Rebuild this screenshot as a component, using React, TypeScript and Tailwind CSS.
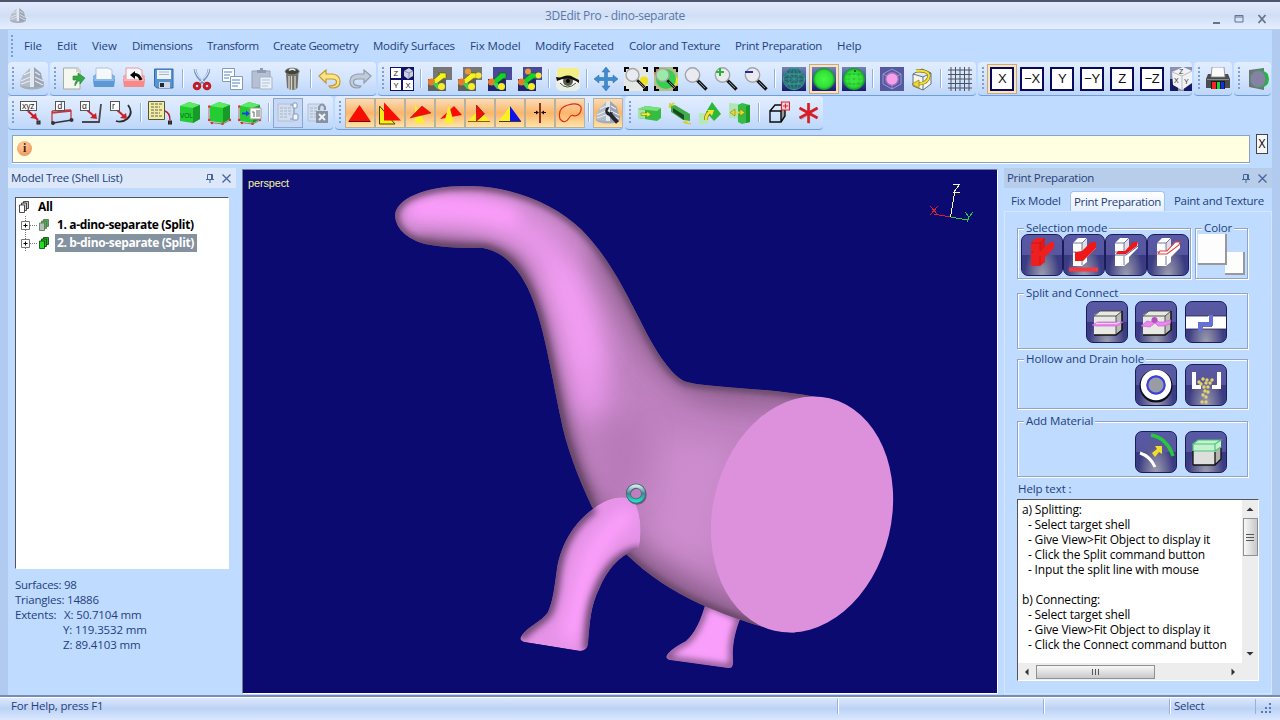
import React from 'react';

type Kids = { children?: React.ReactNode };

function Icon({ children, className = 'h-6 w-6' }: Kids & { className?: string }) {
  return (
    <svg viewBox="0 0 24 24" className={`${className} shrink-0`} fill="none">
      {children}
    </svg>
  );
}

function Cell({ children, state = 'none' }: Kids & { state?: 'none' | 'on' | 'hot' | 'pressed' }) {
  const look =
    state === 'on'
      ? 'border border-[#b9b1a0] bg-gradient-to-b from-[#f9dcb6] via-[#fbb568] to-[#fde3a8]'
      : state === 'hot'
        ? 'border border-[#c7ab7c] bg-[#fbe3c0]'
        : state === 'pressed'
          ? 'border border-[#8ba5d2] bg-[#c5d8f5]'
          : '';
  return <div className={`flex h-[30px] w-[30px] shrink-0 items-center justify-center ${look}`}>{children}</div>;
}

function Sep() {
  return (
    <div className="flex w-2 shrink-0 justify-center">
      <div className="h-[19px] w-[2px] border-l border-[#8db3e3] bg-white" />
    </div>
  );
}

function Grip({ className = 'w-[9px]' }: { className?: string }) {
  return (
    <div className={`flex shrink-0 justify-center ${className}`}>
      <div className="h-[23px] w-[2px] bg-[repeating-linear-gradient(to_bottom,#7ba0d6_0_2px,transparent_2px_4px)]" />
    </div>
  );
}

function Segment({ children, className }: Kids & { className: string }) {
  return (
    <div
      className={`flex shrink-0 items-center overflow-hidden rounded-sm border-b border-[#6f9dd8] bg-gradient-to-b from-[#e2edff] via-[#d3e4fd] to-[#bdd6f9] ${className}`}
    >
      {children}
    </div>
  );
}

const Logo = ({ wrench = false }: { wrench?: boolean }) => (
  <Icon>
    <ellipse cx="12" cy="18.500" rx="12" ry="4" fill="#a3adbc" />
    <path d="M0 15L3 8l7-7v19L1 19z" fill="#b3bcc9" />
    <path d="M10 1l4-1v20h-4z" fill="#e3e8ef" />
    <path d="M14 0l7 6 1 5 2 5-1 3-9 2z" fill="#9aa4b4" />
    <path d="M1 14l9-4M1 17l9-3M4 8l6-3M15 5l5 3M15 10l8 4M15 14l8 4" stroke="#e6ebf2" strokeWidth="1.200" />
    {wrench && (
      <>
        <path d="M13 12l8.500 9.500" stroke="#23262e" strokeWidth="4" />
        <path d="M10 7q-2 4 1 7 4 2 6-3l-3 1-2.500-2 2-4q-2 0-3.500 1z" fill="#23262e" />
      </>
    )}
  </Icon>
);

const NewIcon = () => (
  <Icon>
    <path d="M1.500 1h14l2.500 2v19H1.500z" fill="#f4f8ee" stroke="#a4ad9e" />
    <path d="M14 2h4v3h-4z" fill="#cfd5c8" />
    <path d="M11 9h5V6l7 5-5 6v-3h-2l-3 5q-1-3 2-6h-4z" fill="#35a845" stroke="#268436" strokeWidth=".6" />
  </Icon>
);
const Tray = ({ red = false }: { red?: boolean }) => (
  <Icon>
    <path d="M4 1h12l4 2v10H4z" fill="#f5f8fc" stroke={red ? '#e89a9a' : '#b4c3d6'} />
    <path d="M1 9l3-2v5h16V7l3 2-1 10H2z" fill={red ? '#f5a3a3' : '#7eaee2'} />
    <path d="M1 12h22l-1 8H2z" fill={red ? '#f8898b' : '#5c97d6'} />
    <path d="M2 13h20" stroke={red ? '#ffd9d9' : '#c4e0fa'} />
    {red && (
      <>
        <path d="M11 8q5-2 8 5" stroke="#0b0b0b" strokeWidth="3" />
        <path d="M13 4v8L8 8z" fill="#000" />
      </>
    )}
  </Icon>
);
const SaveIcon = () => (
  <Icon>
    <path d="M2.500 2h18.500v19H5l-2.500-2z" fill="#5695d2" stroke="#346ba8" />
    <path d="M5 3h14v9H5z" fill="#eef3fa" />
    <path d="M7 5h10M7 7.500h10" stroke="#a8b8cc" />
    <path d="M7 15h11v6H7z" fill="#d3d8df" />
    <path d="M8 16h4v4H8z" fill="#1d2a3c" />
  </Icon>
);
const CutIcon = () => (
  <Icon>
    <path d="M5 2q0 7 10 15M19 2q0 7-10 15" stroke="#6f93be" strokeWidth="2.600" />
    <path d="M5 2q1 7 10 14M19 2q-1 7-10 14" stroke="#eef5fd" strokeWidth="1" />
    <circle cx="7" cy="19" r="2.800" stroke="#c01c22" strokeWidth="3" />
    <circle cx="17" cy="19" r="2.800" stroke="#c01c22" strokeWidth="3" />
  </Icon>
);
const CopyIcon = () => (
  <Icon>
    <path d="M2.500 1.500h12v13h-12z" fill="#fff" stroke="#829bbb" />
    <path d="M10.500 9.500h12v13h-12z" fill="#fff" stroke="#829bbb" />
    <path d="M4 5h8M4 8h6M4 11h5M12 13h8M12 16h8M12 19h6" stroke="#4f83c1" />
  </Icon>
);
const PasteIcon = () => (
  <Icon>
    <path d="M2 4h18v17H2z" fill="#b5c1d3" stroke="#93a2b9" />
    <path d="M7 5V3h3V1h3v2h3v3H7z" fill="#8e9bb0" />
    <path d="M10 10h12v12H10z" fill="#eaf0f8" stroke="#a7b5c9" />
    <path d="M12 13h8M12 16h8M12 19h6" stroke="#b4c1d5" />
  </Icon>
);
const TrashIcon = () => (
  <Icon>
    <path d="M6 6h12.500l-1 15q-5 4-10.500 0z" fill="#706f68" />
    <path d="M9 9v13M11.500 9v14M15 9v13" stroke="#d8d6cc" strokeWidth="1.300" />
    <ellipse cx="12.200" cy="4.500" rx="7" ry="3.400" fill="#44443e" stroke="#8a887b" />
    <path d="M9 3.500q3-2.500 6.500 0" stroke="#f1f1f1" strokeWidth="1.400" />
  </Icon>
);
const UndoIcon = ({ flip = false }: { flip?: boolean }) => (
  <Icon>
    <g transform={flip ? 'translate(24 0) scale(-1 1)' : undefined}>
      <path
        d="M1 9l7-6v4h6.500q7.500 1 7.500 7.500T14 21q-2 0-3-2 8 0 7.500-4.500-.5-2.500-4-2.500H8v4z"
        fill={flip ? '#c2ccd9' : '#fae585'}
        stroke={flip ? '#929dac' : '#c59932'}
        strokeWidth="1.200"
      />
    </g>
  </Icon>
);

const ViewsIcon = () => (
  <Icon>
    <path fill="#10106c" d="M0 0h24v24H0z" />
    <path fill="#fff" d="M1 1h10v10H1zM1 13h10v10H1zM13 13h10v10H13z" />
    <path fill="#c9cddc" d="M14 4l5-3 4 3v5l-5 3-4-3z" />
    <path d="M14 4l5 2 4-2M19 6v5" stroke="#70759a" strokeWidth=".7" />
    <g fill="#222" fontSize="7.500" fontFamily="Liberation Sans, sans-serif">
      <text x="3.500" y="8.700">Z</text>
      <text x="3.500" y="20.700">Y</text>
      <text x="15.500" y="20.700">X</text>
    </g>
  </Icon>
);

const ShapeIcon = ({ blue = false, extra = false }: { blue?: boolean; extra?: boolean }) => (
  <Icon>
    <path d="M5 0h19v13H5z" fill={blue ? '#48489c' : '#777'} />
    <path d="M0 12h18v12H0z" fill={blue ? '#25256f' : '#606060'} />
    <path d="M4 14L12 7l-2-1h8v6l-2-1-9 7z" fill={blue ? '#16d22a' : '#f7f323'} stroke={blue ? '#075b0c' : '#555a00'} strokeWidth=".6" />
    <circle cx="3.500" cy="15" r="3.500" fill="#ed7926" />
    <path d="M4 16h6l1 6H9z" fill="#3ed050" />
    <circle cx="13.500" cy="19.500" r="3.500" fill="#f5ed28" />
    {extra && (
      <>
        <circle cx="10" cy="4.500" r="3" fill="#f0963a" />
        <circle cx="20.500" cy="8.500" r="3" fill="#f4e92c" />
      </>
    )}
  </Icon>
);

const EyeIcon = () => (
  <Icon>
    <rect width="24" height="24" rx="5" fill="#e8ede6" />
    <rect x="1" y="1" width="22" height="10" rx="4" fill="#f2ef86" />
    <path d="M1 13q10-7 22 1-10 12-22-1z" fill="#f8f8f8" />
    <circle cx="12" cy="14" r="5" fill="#595a45" />
    <circle cx="12" cy="14" r="2" fill="#000" />
    <path d="M0 10q4 1 7-.5 6-2 10 .5l6 3v3q-11-8-22-2z" fill="#111" />
    <path d="M4 16q7 8 16 0" stroke="#222" strokeWidth=".8" />
  </Icon>
);
const MoveIcon = () => (
  <Icon>
    <path
      d="M12 0l4 5h-2.500v5.500H19V8l5 4-5 4v-2.500h-5.500V19H16l-4 5-4-5h2.500v-5.500H5V16l-5-4 5-4v2.500h5.500V5H8z"
      fill="#3f8bd0"
      stroke="#2c6ba5"
      strokeWidth=".5"
    />
  </Icon>
);
const Zoom = ({ kind = '' }: { kind?: string }) => {
  const boxed = kind === 'fit' || kind === 'all';
  return (
    <Icon>
      {boxed && (
        <>
          <path fill={kind === 'all' ? '#b5bd8c' : '#e5e8e4'} d="M0 0h24v24H0z" />
          {kind === 'all' && <circle cx="4" cy="5" r="4" fill="#e07432" />}
          <circle cx="20" cy="14" r="4.500" fill="#efdf25" />
          {kind === 'all' && <circle cx="12" cy="12" r="10" fill="#37cf4f" />}
          <path d="M1 5V1h4M19 1h4v4M1 19v4h4M19 23h4v-4" stroke="#050505" strokeWidth="2" />
        </>
      )}
      <path d="M13 13l9.500 9.500" stroke="#17191c" strokeWidth={boxed ? 2.600 : 3.400} />
      <path d="M15 15l6 6" stroke="#aaa" strokeWidth=".8" />
      <circle cx="8.500" cy="8" r={boxed ? 6.500 : 7.200} fill={kind === 'all' ? '#9deaa8' : '#e9ebf0'} stroke="#a3a5a8" strokeWidth="1.400" />
      {kind === 'in' && <path d="M2 5h8M6 1v8" stroke="#2cb733" strokeWidth="2" />}
      {kind === 'out' && <path d="M1 5h8" stroke="#242d98" strokeWidth="2" />}
    </Icon>
  );
};

const Ball = ({ kind }: { kind: 'wire' | 'solid' | 'mesh' }) => (
  <Icon>
    <defs>
      <linearGradient id="tile" x2="0" y2="1">
        <stop stopColor="#7484b8" />
        <stop offset="1" stopColor="#181a6f" />
      </linearGradient>
      <radialGradient id="ball">
        <stop stopColor="#48f848" />
        <stop offset=".75" stopColor="#30df35" />
        <stop offset="1" stopColor="#168d37" />
      </radialGradient>
    </defs>
    <path fill="url(#tile)" d="M0 0h24v24H0z" />
    <circle cx="12" cy="12" r="11" fill={kind === 'wire' ? '#2b5f7c' : 'url(#ball)'} />
    {kind !== 'solid' && (
      <g stroke={kind === 'wire' ? '#37a884' : '#1ca62e'} strokeWidth={kind === 'wire' ? '.7' : '.35'}>
        <ellipse cx="12" cy="12" rx="5" ry="11" />
        <ellipse cx="12" cy="12" rx="11" ry="5" />
        <circle cx="12" cy="12" r="10.700" />
        <path d="M12 1v22M1 12h22M4 5l16 14M20 5L4 19M3 7h18M3 17h18" />
      </g>
    )}
    {kind === 'mesh' && <circle cx="13" cy="4" r="1" fill="#104514" />}
  </Icon>
);
const Hex = () => (
  <Icon>
    <path fill="#5759a0" d="M0 0h24v24H0z" />
    <path d="M12 2l9 5v10l-9 5-9-5V7zM3 7l9 5 9-5M12 12v10" stroke="#a4a7d4" strokeWidth=".8" />
    <circle cx="12" cy="12" r="7" fill="#c880d4" opacity=".6" />
    <circle cx="12" cy="12" r="5.500" fill="#f6a0ea" />
  </Icon>
);
const RotCube = () => (
  <Icon>
    <path d="M3 7l9-5 9 4v11l-8 6-10-4zM3 7l10 3 8-4M13 10v13" fill="#f3f3f0" stroke="#5b6473" strokeWidth=".9" />
    <path d="M6 4q13-1 13 5-1 7-10 8" stroke="#7a6a00" strokeWidth="3.200" />
    <path d="M6 4q13-1 13 5-1 7-10 8" stroke="#f1e03a" strokeWidth="2" />
    <path d="M9 13v8l-7-4z" fill="#eddb32" stroke="#7a6a00" strokeWidth=".6" />
  </Icon>
);
const GridIcon = () => (
  <Icon>
    <path d="M0 3h24M0 7.500h24M0 12h24M0 16.500h24M0 21h24M3 0v24M7.500 0v24M12 0v24M16.500 0v24M21 0v24" stroke="#4c525c" strokeWidth="1" />
  </Icon>
);
const AxisCube = () => (
  <Icon>
    <path fill="#8b90b8" d="M0 0h24v24H0z" />
    <path fill="#171b65" d="M0 12h8v12H0zM14 16h10v8H14z" />
    <path d="M2 5l11-5 9 4v12l-10 7-9-5z" fill="#f1f2f3" />
    <path d="M2 5l10 4 10-5M12 9v14" stroke="#b8bbc2" />
    <g fill="#333" fontSize="7" fontFamily="Liberation Sans, sans-serif">
      <text x="9" y="7">Z</text>
      <text x="4" y="16">X</text>
      <text x="14" y="17">Y</text>
    </g>
  </Icon>
);
const PrinterIcon = () => (
  <Icon>
    <path d="M2 7h20l2 5v9H0v-9z" fill="#4a4b4c" />
    <path d="M6 0h12l1 10H5z" fill="#fafafa" stroke="#868686" strokeWidth=".8" />
    <path d="M1 12h22v1H1z" fill="#8a8d8e" />
    <path fill="#1a1a1a" d="M5 14h14v8H5z" />
    <path fill="#f22" d="M6 15h4v7H6z" />
    <path fill="#1bd531" d="M11 15h3v7h-3z" />
    <path fill="#112df2" d="M15 15h3v7h-3z" />
  </Icon>
);
const HalfBall = () => (
  <Icon>
    <path d="M3 3l15-2v22L3 20z" fill="#6c7478" />
    <path d="M12 2q11 2 11 10T14 21z" fill="#23b843" />
    <ellipse cx="12" cy="12" rx="8" ry="8.500" fill="#8582a4" stroke="#4c9170" />
  </Icon>
);

const Dim = ({ label, kind }: { label: string; kind: number }) => (
  <Icon>
    {kind === 0 && <path d="M8 10l10 9" stroke="#cc1f27" strokeWidth="2.200" />}
    {kind === 1 && <path d="M2 10l19-1M2 10v11M21 9v9M2 12l19-2" stroke="#c2383a" strokeWidth="1.300" />}
    {kind === 1 && <path d="M3 22l19-3" stroke="#333" strokeWidth="1.600" />}
    {kind === 2 && <path d="M21 3l-2 18H2" stroke="#46494c" strokeWidth="1.800" />}
    {kind === 3 && <path d="M18 4q6 8-1 14-5 4-11 2" stroke="#2a2b2d" strokeWidth="1.800" />}
    {kind > 1 && <path d="M7 9l8 7" stroke="#cc1f27" strokeWidth="2" />}
    {kind !== 1 && <path d="M10 17l6-5 1 6z" fill="#d01f24" />}
    <rect x={kind === 1 ? 5.500 : 0.500} y=".5" width={kind === 0 ? 16 : 9} height="9" fill="#fff" stroke="#555" />
    <text x={kind === 1 ? 7.500 : 2} y="8" fontSize="8.500" fill="#222" fontFamily="Liberation Sans, sans-serif">
      {label}
    </text>
    {kind === 0 && <rect x="17" y="20" width="3" height="3" fill="#555" stroke="#222" />}
    {kind === 1 && (
      <>
        <circle cx="3" cy="22" r="2" fill="#333" />
        <circle cx="21.500" cy="19" r="2" fill="#333" />
      </>
    )}
  </Icon>
);
const NoteIcon = () => (
  <Icon>
    <path d="M.5.5h16v18H.5z" fill="#f2eda4" stroke="#57543a" />
    <path d="M3 3h11M3 6h9M3 9h11M3 12h9M3 15h11" stroke="#65624a" strokeDasharray="3 1" />
    <path d="M17 10q5 2 5 9" stroke="#b71c25" strokeWidth="1.400" />
    <rect x="20.500" y="20" width="3" height="3" fill="#633" stroke="#222" />
  </Icon>
);
const GreenCube = ({ kind }: { kind: number }) => (
  <Icon>
    <path d="M2 5l9-4 11 3v14l-7 4-13-2z" fill="#24cc34" />
    <path d="M2 5l9-4 11 3-7 3z" fill="#5cea62" />
    <path d="M15 7l7-3v14l-7 4z" fill="#179a28" />
    {kind === 0 && (
      <text x="2" y="17" fontSize="6.500" fill="#096515" fontFamily="Liberation Sans, sans-serif">
        VOL
      </text>
    )}
    {kind > 0 && (
      <>
        <path d="M1 5v15M2 21.500l13 1.500 7-4" stroke="#9a5b3c" strokeWidth=".8" />
        <g fill="#e03028">
          <circle cx="1.200" cy="5.500" r="1.200" /><circle cx="1.200" cy="19" r="1.200" /><circle cx="4" cy="22" r="1.200" />
          <circle cx="14.500" cy="23" r="1.200" /><circle cx="22" cy="19" r="1.200" />
        </g>
      </>
    )}
    {kind === 2 && (
      <>
        <path d="M12 7h11v11H12z" fill="#fff" stroke="#999" />
        <path d="M14 11h2v5m3-7v7m2-7v7" stroke="#666" />
        <path d="M4 12.500h6" stroke="#1647e1" strokeWidth="2" />
        <path d="M8 9.500l4 3-4 3z" fill="#1647e1" />
      </>
    )}
  </Icon>
);
const GrayList = ({ x = false }: { x?: boolean }) => (
  <Icon>
    <path d="M2 3h16v17H2z" fill="#d2ddee" stroke="#b3c0d5" />
    <path d="M4 7h11M4 10h11M4 13h11M4 16h8" stroke="#a7b6ce" strokeDasharray="3 1" />
    {x ? (
      <>
        <path d="M13 9V6q3-5 6 0v3" stroke="#8995a7" strokeWidth="2" />
        <path d="M10 10h12v12H10z" fill="#8791a0" />
        <path d="M13 13l6 6m0-6l-6 6" stroke="#eef4fc" strokeWidth="2" />
      </>
    ) : (
      <>
        <path d="M14 4h4v14h-4" stroke="#8998b2" />
        <rect x="17" y="2" width="4" height="5" rx="1" fill="#fff" stroke="#8998b2" />
        <rect x="17" y="13" width="5" height="6" rx="1" fill="#eef5ff" stroke="#8998b2" />
      </>
    )}
  </Icon>
);

const triShapes: React.ReactNode[] = [
  <g key="0">
    <path d="M11.500 4l11 16H.5z" fill="#f80d05" />
    <path d="M.5 20.500h22" stroke="#661000" />
  </g>,
  <g key="1">
    <path d="M1.500 5v18H17z" fill="#f7ef18" stroke="#464600" />
    <path d="M6 1.500l17 18H6z" fill="#f80d05" />
  </g>,
  <g key="2">
    <path d="M7 3l10 19H7z" fill="#faf022" />
    <path d="M2 17L14 5l9 7z" fill="#f80d05" stroke="#a31500" strokeWidth=".5" />
  </g>,
  <g key="3">
    <path d="M2 18L16 5l8 9z" fill="#f80d05" />
    <path d="M11 4l5 18H6z" fill="#faf022" />
  </g>,
  <g key="4">
    <path d="M0 20L11 9l11 11z" fill="#faf022" />
    <path d="M8.500 4l8 9-8 7z" fill="#f80d05" stroke="#7b0000" strokeWidth=".6" />
    <path d="M0 20.500h22" stroke="#773c00" strokeWidth=".8" />
  </g>,
  <g key="5">
    <path d="M12 5v15H1z" fill="#faf022" />
    <path d="M12 5l11 15H12z" fill="#1010e8" />
    <path d="M1 20.500h22" stroke="#111" strokeWidth=".8" />
  </g>,
  <g key="6">
    <path d="M12 2v20" stroke="#7a2419" strokeWidth="1.800" />
    <path d="M6 11.500h3M15 11.500h3" stroke="#111" />
    <path d="M8 9.500v4l3-2zM16 9.500v4l-3-2z" fill="#111" />
  </g>,
  <path key="7" d="M2 18Q-1 7 10 4q10-3 13 2 1 7-6 9-4-2-6 2-4 7-9 1z" stroke="#e22b1d" strokeWidth="1.200" />,
];

const BoxOp = ({ kind }: { kind: number }) => (
  <Icon>
    {kind === 0 && (
      <>
        <path d="M0 8l8-3 15 2v10l-4 3-19-3z" fill="#35bd42" />
        <path d="M0 8l8-3 15 2-4 3z" fill="#79e07c" />
        <path d="M0 8l7 1v9l-7-1z" fill="#a5e4a7" />
        <path d="M3 12h6v-2l4 3.500-4 3v-2H3z" fill="#f1ed30" stroke="#5e7a10" strokeWidth=".5" />
      </>
    )}
    {kind === 1 && (
      <>
        <path d="M3 5l4-1 15 9v7l-7-1L3 11z" fill="#3fae4a" />
        <path d="M5 7l11 7v5L5 11z" fill="#1c4a22" />
        <path d="M1 6l5-4M2 2v5M15 21l8 2M18 19v4" stroke="#d7cf31" strokeWidth="1.800" />
      </>
    )}
    {kind === 2 && (
      <>
        <path d="M1 12h9v11H1z" fill="#b5eab5" />
        <path d="M14 1l9 12-7 7-8-9z" fill="#2cb93a" />
        <path d="M8 19q0-6 4-8" stroke="#776c0c" strokeWidth="4" />
        <path d="M8 19q0-6 4-8" stroke="#f1e330" strokeWidth="2.800" />
        <path d="M9 9l7 0-2 6z" fill="#f1e330" />
      </>
    )}
    {kind === 3 && (
      <>
        <path d="M1 2l11 1v15L1 17z" fill="#b0e6b5" />
        <path d="M10 4l4-2 8 2v17l-8 2-4-2z" fill="#35bd46" />
        <path d="M18 5l4-1v17l-4 1z" fill="#199c2c" />
        <path d="M6 11.500h8" stroke="#eada2c" strokeWidth="2" />
        <path d="M7 8l-5 3.500L7 15zM12 8l5 3.500-5 3.500z" fill="#eada2c" stroke="#706a0c" strokeWidth=".5" />
      </>
    )}
    {kind === 4 && (
      <g transform="translate(3 0)">
        <path d="M12 10l4-5v10l-4 6z" fill="#999" />
        <path d="M1 10h11v11H1zM1 10l5-6h10l-4 6M12 21l4-6V5" stroke="#0b0b0b" strokeWidth="1.400" />
        <path d="M12.500 1h8v8h-8z" fill="#f3d9e4" stroke="#dc2530" strokeWidth="1.200" />
        <path d="M16.500 2.500v5M14 5h5" stroke="#dc2530" strokeWidth="1.200" />
      </g>
    )}
    {kind === 5 && (
      <>
        <path d="M13 3v20M5 8l17 9M22 7L5 18" stroke="#999" strokeWidth="2.500" opacity=".5" />
        <path d="M12.500 2v20M3.500 7l18 10M21.500 7L3.500 17" stroke="#d81c24" strokeWidth="2.600" />
      </>
    )}
  </Icon>
);

function AxisBtn({ label, hot = false }: { label: string; hot?: boolean }) {
  return (
    <Cell state={hot ? 'hot' : 'none'}>
      <div className="flex h-6 w-6 shrink-0 items-center justify-center border-2 border-[#0a0a5c] bg-white font-['Liberation_Sans',sans-serif] text-[13px] leading-none tracking-[-0.5px] text-[#111]">
        {label}
      </div>
    </Cell>
  );
}

function RowOne() {
  return (
    <div className="flex h-[34px] gap-[2px]">
      <Segment className="w-[40px]">
        <Grip />
        <Cell><Logo /></Cell>
      </Segment>
      <Segment className="w-[326px]">
        <Grip />
        <Cell><NewIcon /></Cell>
        <Cell><Tray /></Cell>
        <Cell><Tray red /></Cell>
        <Cell><SaveIcon /></Cell>
        <Sep />
        <Cell><CutIcon /></Cell>
        <Cell><CopyIcon /></Cell>
        <Cell><PasteIcon /></Cell>
        <Cell><TrashIcon /></Cell>
        <Sep />
        <Cell><UndoIcon /></Cell>
        <Cell><UndoIcon flip /></Cell>
      </Segment>
      <Segment className="w-[598px]">
        <Grip />
        <Cell><ViewsIcon /></Cell>
        <Sep />
        <Cell><ShapeIcon /></Cell>
        <Cell><ShapeIcon extra /></Cell>
        <Cell><ShapeIcon blue /></Cell>
        <Cell><ShapeIcon blue extra /></Cell>
        <Sep />
        <Cell><EyeIcon /></Cell>
        <Sep />
        <Cell><MoveIcon /></Cell>
        <Cell><Zoom kind="fit" /></Cell>
        <Cell><Zoom kind="all" /></Cell>
        <Cell><Zoom /></Cell>
        <Cell><Zoom kind="in" /></Cell>
        <Cell><Zoom kind="out" /></Cell>
        <Sep />
        <Cell><Ball kind="wire" /></Cell>
        <Cell state="hot"><Ball kind="solid" /></Cell>
        <Cell><Ball kind="mesh" /></Cell>
        <Sep />
        <Cell><Hex /></Cell>
        <Cell><RotCube /></Cell>
        <Sep />
        <Cell><GridIcon /></Cell>
      </Segment>
      <Segment className="w-[214px]">
        <Grip />
        <AxisBtn label="X" hot />
        <AxisBtn label="−X" />
        <AxisBtn label="Y" />
        <AxisBtn label="−Y" />
        <AxisBtn label="Z" />
        <AxisBtn label="−Z" />
        <Cell><AxisCube /></Cell>
      </Segment>
      <Segment className="w-[38px]">
        <Grip />
        <Cell><PrinterIcon /></Cell>
      </Segment>
      <Segment className="w-[37px]">
        <Grip />
        <Cell><HalfBall /></Cell>
      </Segment>
    </div>
  );
}

function RowTwo() {
  return (
    <div className="flex h-[34px] gap-[2px]">
      <Segment className="w-[325px]">
        <Grip />
        <Cell><Dim label="xyz" kind={0} /></Cell>
        <Cell><Dim label="d" kind={1} /></Cell>
        <Cell><Dim label="α" kind={2} /></Cell>
        <Cell><Dim label="r" kind={3} /></Cell>
        <Sep />
        <Cell><NoteIcon /></Cell>
        <Cell><GreenCube kind={0} /></Cell>
        <Cell><GreenCube kind={1} /></Cell>
        <Cell><GreenCube kind={2} /></Cell>
        <Sep />
        <Cell state="pressed"><GrayList /></Cell>
        <Cell><GrayList x /></Cell>
      </Segment>
      <Segment className="w-[288px]">
        <Grip className="w-[10px]" />
        {triShapes.map((shape, i) => (
          <Cell key={i} state="on"><Icon>{shape}</Icon></Cell>
        ))}
        <Sep />
        <Cell state="on"><Logo wrench /></Cell>
      </Segment>
      <Segment className="w-[198px]">
        <Grip className="w-[10px]" />
        <Cell><BoxOp kind={0} /></Cell>
        <Cell><BoxOp kind={1} /></Cell>
        <Cell><BoxOp kind={2} /></Cell>
        <Cell><BoxOp kind={3} /></Cell>
        <Sep />
        <Cell><BoxOp kind={4} /></Cell>
        <Cell><BoxOp kind={5} /></Cell>
      </Segment>
    </div>
  );
}

const PinClose = () => (
  <div className="flex items-center gap-[9px]">
    <svg viewBox="0 0 10 10" className="h-[10px] w-[10px] translate-x-[2px]" fill="none" stroke="#45659c">
      <path d="M2.500 1.500h5v5h-5zM1 6.500h8M5 7v3M6.500 2v4" />
    </svg>
    <svg viewBox="0 0 9 9" className="h-[9px] w-[9px]" stroke="#45659c" strokeWidth="1.300">
      <path d="M.5.5l8 8M8.500.5l-8 8" />
    </svg>
  </div>
);

const Stack = ({ front, back, line = '#222' }: { front: string; back: string; line?: string }) => (
  <svg viewBox="0 0 12 14" className="h-[14px] w-3 shrink-0" stroke={line} strokeWidth=".8">
    <path d="M5.500 1.500h5v7h-5z" fill={back} />
    <path d="M3.500 3h5v7.500h-5z" fill={back} />
    <path d="M1.500 5h5v7.500h-5z" fill={front} />
  </svg>
);

const Plus = () => (
  <svg viewBox="0 0 17 18" className="h-[18px] w-[17px] shrink-0" fill="none">
    <path d="M4.500 0v18M9 9.500h8" stroke="#777" strokeDasharray="1 1" />
    <path d="M.5 5.500h8v8h-8z" fill="#fff" stroke="#777" />
    <path d="M2.500 9.500h4M4.500 7.500v4" stroke="#000" />
  </svg>
);

function ModelTree() {
  return (
    <section className="flex w-[228px] flex-col">
      <header className="flex h-5 items-center justify-between bg-[#dce8f9] pl-[3px] pr-[5px] tracking-[-0.26px]">
        <span>Model Tree (Shell List)</span>
        <PinClose />
      </header>
      <div className="ml-[7px] mt-[9px] h-[372px] w-[214px] border border-b-white border-l-[#555] border-r-white border-t-[#555] bg-white text-[12px] font-bold tracking-[-0.35px] text-black">
        <div className="flex h-[18px] items-center pl-[2px]">
          <Stack front="#fff" back="#ccc" />
          <span className="ml-2">All</span>
        </div>
        <div className="flex h-[18px] items-center pl-[5px]">
          <Plus />
          <Stack front="#b8bfb8" back="#4fb04f" line="#567056" />
          <span className="ml-[5px] px-[2px]">1. a-dino-separate (Split)</span>
        </div>
        <div className="flex h-[18px] items-center pl-[5px]">
          <Plus />
          <Stack front="#22dd22" back="#1fb41f" line="#063d06" />
          <span className="ml-[5px] w-[142px] whitespace-nowrap bg-[#84919f] px-[2px] leading-[18px] text-white">
            2. b-dino-separate (Split)
          </span>
        </div>
      </div>
      <div className="ml-[7px] mt-[8px] leading-[15px] tracking-[-0.15px]">
        <div className="tracking-[-0.28px]">Surfaces: 98</div>
        <div className="tracking-[-0.22px]">Triangles: 14886</div>
        <div className="flex">
          <span className="w-[49px]">Extents:</span>
          <span>X: 50.7104 mm</span>
        </div>
        <div className="pl-12">Y: 119.3532 mm</div>
        <div className="pl-12">Z: 89.4103 mm</div>
      </div>
    </section>
  );
}

const bodyPath =
  'M395 216C395 199 425 186 465 186C510 185 554 203 581 229C608 256 624 289 640 320C653 347 669 373 684 381C702 388 765 387 816 397L795 633C765 630 733 618 700 604C672 591 649 576 627 555L592 507C578 477 566 447 560 415C552 376 545 335 536 309C526 277 508 252 483 248C463 248 445 248 425 244C407 239 396 229 395 216Z';
const legPath =
  'M594 508C606 499 623 493 634 501C641 514 642 531 639 548C625 553 610 564 600 587C590 607 590 622 588 644Q587 651 580 651L524 642Q518 640 522 635C527 627 541 622 548 612C553 600 554 590 557 568C561 545 573 523 594 508Z';
const farLeg =
  'M706 602C701 620 695 633 686 641C677 646 670 650 667 655Q665 659 670 660L728 668Q734 669 733 659C732 646 735 631 741 617Z';

function Viewport() {
  return (
    <div className="h-[525px] w-[756px] border border-b-white border-l-[#777b91] border-r-white border-t-[#777b91] bg-[#0b0a70]">
      <svg viewBox="243 170 754 523" className="h-full w-full">
        <defs>
          <clipPath id="bodyClip"><path d={bodyPath} /></clipPath>
          <clipPath id="legClip"><path d={legPath} /></clipPath>
          <clipPath id="farClip"><path d={farLeg} /></clipPath>
          <filter id="b3" filterUnits="userSpaceOnUse" x="243" y="170" width="754" height="523"><feGaussianBlur stdDeviation="3.500" /></filter>
          <filter id="b8" filterUnits="userSpaceOnUse" x="243" y="170" width="754" height="523"><feGaussianBlur stdDeviation="8" /></filter>
          <filter id="b14" filterUnits="userSpaceOnUse" x="243" y="170" width="754" height="523"><feGaussianBlur stdDeviation="14" /></filter>
          <linearGradient id="ring" x2="0" y2="1">
            <stop stopColor="#d3e6ea" />
            <stop offset=".5" stopColor="#48828e" />
            <stop offset="1" stopColor="#20dfc0" />
          </linearGradient>
        </defs>
        <g clipPath="url(#farClip)">
          <path d={farLeg} fill="#f99ffb" />
          <path d={farLeg} fill="none" stroke="#7e5084" strokeWidth="7" filter="url(#b3)" />
        </g>
        <g clipPath="url(#bodyClip)">
          <path d={bodyPath} fill="#bf81c0" />
          <path d="M700 440L680 560" stroke="#cc8ccd" strokeWidth="70" fill="none" filter="url(#b14)" />
          <path d="M420 212C480 209 525 218 553 260C573 295 584 345 590 400" fill="none" stroke="#ec98ed" strokeWidth="38" strokeLinecap="round" filter="url(#b14)" />
          <path d="M415 209Q455 203 510 216" fill="none" stroke="#ff9eff" strokeWidth="18" strokeLinecap="round" filter="url(#b8)" />
          <path d="M560 275Q580 310 588 360" fill="none" stroke="#f7a0f7" strokeWidth="22" strokeLinecap="round" filter="url(#b14)" />
          <path d="M625 420Q625 455 614 490" fill="none" stroke="#b778b8" strokeWidth="32" filter="url(#b14)" />
          <path d="M600 245C645 320 660 385 725 392S780 390 816 396" fill="none" stroke="#805680" strokeWidth="20" filter="url(#b14)" />
          <path d="M590 507L627 555C672 595 730 620 800 636" fill="none" stroke="#7c537c" strokeWidth="24" filter="url(#b14)" />
          <path d="M416 245C460 252 490 246 512 265C545 310 550 430 592 507" fill="none" stroke="#6d4a6e" strokeWidth="15" filter="url(#b8)" />
          <path d={bodyPath} fill="none" stroke="#573b58" strokeWidth="6.500" filter="url(#b3)" />
        </g>
        <ellipse cx="802" cy="514.500" rx="89.300" ry="119.400" transform="rotate(13.300 802 514.500)" fill="#dd91dc" />
        <g clipPath="url(#legClip)">
          <path d={legPath} fill="#e592e7" />
          <path d="M632 512Q592 540 583 585T566 640" fill="none" stroke="#ffa0ff" strokeWidth="17" filter="url(#b8)" />
          <path
            d="M594 508C573 523 561 545 557 568C554 590 553 600 548 612C541 622 527 627 520 638M588 651C590 622 590 607 600 587C610 564 625 553 641 551"
            fill="none" stroke="#694470" strokeWidth="10" filter="url(#b3)"
          />
        </g>
        <circle cx="637" cy="495" r="8" fill="none" stroke="#5a4569" strokeWidth="3.500" opacity=".7" />
        <circle cx="636" cy="493.500" r="7.600" fill="none" stroke="#376d78" strokeWidth="5" />
        <circle cx="636" cy="493.500" r="7.500" fill="none" stroke="url(#ring)" strokeWidth="3.600" />
        <text x="248" y="187" fill="#f5f59a" fontSize="11" fontFamily="Liberation Sans, sans-serif" textLength="41">perspect</text>
        <g fill="none" shapeRendering="crispEdges">
          <path d="M950.500 217l4-24M953 184h7l-6 8h6" stroke="#f6f6b5" />
          <path d="M950 217l-16-3M930 206l8 9M938 206l-8 9" stroke="#d51d31" />
          <path d="M951 217l16 3M965 212l4 5 4-5M969 217l-2 5" stroke="#31ca3d" />
        </g>
      </svg>
    </div>
  );
}

function Group({ label, className, labelClass = '', children }: Kids & { label: string; className: string; labelClass?: string }) {
  return (
    <div className={`flex flex-col border border-[#91a5c2] shadow-[1px_1px_0_#fff,inset_1px_1px_0_#fff] ${className}`}>
      <span className={`-mt-[9px] ml-[6px] h-4 self-start whitespace-nowrap bg-[#bfdbff] px-[2px] leading-4 ${labelClass}`}>{label}</span>
      {children}
    </div>
  );
}

function Tile({ children }: Kids) {
  return (
    <div className="h-[42px] w-[42px] shrink-0 overflow-hidden rounded-[7px] border border-[#1b1c5c] bg-[radial-gradient(ellipse_at_50%_105%,#a0a0b0_0%,#5a5a90_45%,transparent_62%),linear-gradient(to_bottom,#5858a4_0%,#5656a0_50%,#3a3a82_51%,#3e3e86_100%)]">
      <svg viewBox="1 1 40 40" className="h-full w-full" fill="none">{children}</svg>
    </div>
  );
}

const Chair = ({ mode }: { mode: 'all' | 'lower' | 'face' | 'edge' }) => {
  const line = mode === 'all' ? '#c41417' : '#55558a';
  return (
    <>
      <path d="M10 9l5-5h9v9l5-5h4v6l-9 9v5l-5 4h-9z" fill={mode === 'all' ? '#ee1f1f' : '#fff'} />
      <path d="M19 9l5-5v9l-5 5z" fill={mode === 'all' ? '#dd1a1a' : '#dedee6'} />
      <path d="M10 9h9l5-5M19 9v8M19 22v9M10 18h3" stroke={line} strokeWidth=".8" />
      {mode === 'lower' && <path d="M12 18l7-1 9-9h5v6l-9 9-4 4h-8z" fill="#ee1818" />}
      {mode === 'face' && <path d="M11 20l2-3h7l8-9h5l-1 4-11 8z" fill="#ee1818" />}
      {mode === 'face' && <path d="M10 21h11l12-9" stroke="#33337a" strokeWidth=".8" />}
      {mode === 'edge' && <path d="M11 20l2-3h7l8-9h5l-1 3-12 9z" stroke="#e83b3b" strokeWidth="1.100" />}
    </>
  );
};

const Block = ({ wave = false }: { wave?: boolean }) => (
  <>
    <path d="M8 14l6-4h22v19l-6 5H8z" fill="#e9e9e3" />
    <path d="M30 15l6-5v19l-6 5z" fill="#bcbcb6" />
    <path d="M8 15h22l6-5M8 15l6-5h22M30 15v19" stroke="#444" strokeWidth=".9" />
    <path d="M8 34h22l6-5V10" stroke="#111" strokeWidth="1.500" />
    <path
      d={wave ? 'M6 25l6-5 4 1 3-4 5 4 4 0 8-2-1 4-6 2h-6l-3-3-5 4z' : 'M6 24l6-3h25l-6 4H10z'}
      fill="#e789ee"
      stroke="#c862d4"
      strokeWidth=".7"
    />
    {!wave && <path d="M10 22.500h20l4-1.500" stroke="#f7d9fa" strokeWidth="1" />}
    {wave && <circle cx="19.500" cy="19" r="3" fill="#b24fc0" />}
  </>
);

const helpLines = [
  'a) Splitting:',
  '  - Select target shell',
  '  - Give View>Fit Object to display it',
  '  - Click the Split command button',
  '  - Input the split line with mouse',
  '',
  'b) Connecting:',
  '  - Select target shell',
  '  - Give View>Fit Object to display it',
  '  - Click the Connect command button',
];

function HelpBox() {
  return (
    <div className="ml-[12px] flex h-[182px] w-[242px] flex-col border border-b-white border-l-[#555] border-r-white border-t-[#555] bg-white">
      <div className="flex h-[163px] shrink-0">
        <div className="flex-1 overflow-hidden whitespace-pre pl-[4px] pt-[2px] text-[12px] leading-[15px] tracking-[-0.16px] text-black">
          {helpLines.map((line, i) => (
            <div key={i} className="h-[15px]">{line}</div>
          ))}
        </div>
        <div className="flex w-[16px] flex-col items-center bg-[#ededee]">
          <svg viewBox="0 0 16 18" className="h-[18px] w-4"><path d="M4.500 11L8 7.500l3.500 3.500z" fill="#333" /></svg>
          <div className="flex h-[38px] w-[15px] flex-col items-center justify-center gap-[2px] border border-[#909090] bg-gradient-to-r from-[#f8f8f8] to-[#c8c8cb]">
            <i className="h-px w-2 bg-[#555]" /><i className="h-px w-2 bg-[#555]" /><i className="h-px w-2 bg-[#555]" />
          </div>
          <svg viewBox="0 0 16 18" className="mt-auto h-[18px] w-4"><path d="M4.500 7L8 10.500 11.500 7z" fill="#333" /></svg>
        </div>
      </div>
      <div className="flex flex-1 items-center bg-[#ededee]">
        <svg viewBox="0 0 18 16" className="h-4 w-[18px]"><path d="M10.500 4.500L7 8l3.500 3.500z" fill="#333" /></svg>
        <div className="flex h-[14px] w-[119px] items-center justify-center gap-[2px] border border-[#909090] bg-gradient-to-b from-[#f8f8f8] to-[#c8c8cb]">
          <i className="h-[6px] w-px bg-[#555]" /><i className="h-[6px] w-px bg-[#555]" /><i className="h-[6px] w-px bg-[#555]" />
        </div>
        <svg viewBox="0 0 18 16" className="ml-auto mr-[16px] h-4 w-[18px]"><path d="M7.500 4.500L11 8l-3.500 3.500z" fill="#333" /></svg>
      </div>
    </div>
  );
}

function PrintPanel() {
  return (
    <section className="flex w-[268px] flex-col">
      <header className="flex h-5 items-center justify-between bg-[#b8cde9] pl-[3px] pr-[5px] tracking-[-0.3px]">
        <span>Print Preparation</span>
        <PinClose />
      </header>
      <div className="mt-[3px] flex h-[21px] border-b border-[#d4e6ff] tracking-[-0.2px]">
        <div className="flex w-[66px] items-center whitespace-nowrap pl-[7px]">Fix Model</div>
        <div className="flex w-[95px] items-center justify-center whitespace-nowrap rounded-t border border-b-0 border-[#a5c3ec] bg-gradient-to-b from-white to-[#e4efff] tracking-[-0.3px]">
          Print Preparation
        </div>
        <div className="flex items-center whitespace-nowrap pl-[9px] tracking-[-0.3px]">Paint and Texture</div>
      </div>
      <div className="flex h-[482px] flex-col border-x border-b border-[#d4e6ff]">
        <div className="ml-[12px] mt-[16px] flex gap-[4px]">
          <Group label="Selection mode" className="h-[51px] w-[174px]">
            <div className="-mt-[2px] ml-[3px] flex">
              <Tile><Chair mode="all" /></Tile>
              <Tile>
                <Chair mode="lower" />
                <path d="M6 35.500h29" stroke="#f43a40" strokeWidth="4" />
              </Tile>
              <Tile><Chair mode="face" /></Tile>
              <Tile><Chair mode="edge" /></Tile>
            </div>
          </Group>
          <Group label="Color" className="h-[51px] w-[53px]">
            <div className="-mt-[2px] ml-[2px] flex">
              <div className="z-10 h-[31px] w-[29px] border-b-2 border-r-2 border-[#999] bg-[#fdfdfd]" />
              <div className="-ml-[2px] mt-[18px] h-[23px] w-5 border-b-2 border-r-2 border-[#999] bg-[#fdfdfd]" />
            </div>
          </Group>
        </div>
        <Group label="Split and Connect" className="ml-[12px] mt-[14px] h-[56px] w-[231px]">
          <div className="ml-[68px] flex">
            <Tile><Block /></Tile>
            <div className="ml-[7px]"><Tile><Block wave /></Tile></div>
            <div className="ml-[8px]">
              <Tile>
                <path d="M1 15h23v9h-9v4H1zM27 15h14v13H18v-2h9z" fill="#fff" />
                <path d="M1 15h22M27 15h14M1 28h13M18 28h23" stroke="#22225c" strokeWidth=".8" />
                <path d="M26 14v9H15v8" stroke="#6470d4" strokeWidth="4" />
              </Tile>
            </div>
          </div>
        </Group>
        <Group label="Hollow and Drain hole" className="ml-[12px] mt-[10px] h-[50px] w-[231px]" labelClass="tracking-[-0.05px]">
          <div className="-mt-[3px] ml-[117px] flex gap-2">
            <Tile>
              <circle cx="21" cy="22" r="14" stroke="#0c0c20" strokeWidth="5" />
              <circle cx="21" cy="21" r="12.500" stroke="#fff" strokeWidth="5.500" />
              <circle cx="21" cy="21" r="8.500" fill="#999ba5" stroke="#3a40e6" strokeWidth="1.800" />
            </Tile>
            <Tile>
              <path d="M9 8v15h7M34 8v15h-7" stroke="#fff" strokeWidth="4" />
              <g fill="#e4d26e">
                {[[14, 18], [18, 15], [22, 16], [27, 16], [16, 20], [21, 19], [25, 19], [19, 23], [23, 23], [20, 27], [23, 28], [18, 31], [21, 33], [17, 38], [21, 38]].map(([x, y]) => (
                  <circle key={`${x}-${y}`} cx={x} cy={y} r="1.700" />
                ))}
              </g>
            </Tile>
          </div>
        </Group>
        <Group label="Add Material" className="ml-[12px] mt-[12px] h-[56px] w-[231px]">
          <div className="mt-[2px] ml-[117px] flex gap-2">
            <Tile>
              <path d="M16 4q16 3 22 21" stroke="#27c93b" strokeWidth="3.500" />
              <path d="M5 22q10 3 15 14" stroke="#fff" strokeWidth="3" />
              <path d="M17 22l5-4-2-3h7v8l-3-2-4 5z" fill="#efe12b" />
            </Tile>
            <Tile>
              <path d="M8 20h22l6-6v14l-6 6H8z" fill="#dededc" />
              <path d="M30 20l6-6v14l-6 6z" fill="#b4b4b0" />
              <path d="M8 13l5-4h23v8l-6 3H8z" fill="#c3f3cd" />
              <path d="M8 13h22l6-4H13zM30 13v7M8 20h22l6-4M8 13v7" stroke="#4cc27c" strokeWidth="1.200" />
              <path d="M8 34h22l6-6V17M30 21v13M8 20v14" stroke="#111" strokeWidth="1.300" />
            </Tile>
          </div>
        </Group>
        <div className="ml-[13px] mt-[5px] flex h-[17px] items-center pb-[3px]">Help text :</div>
        <HelpBox />
      </div>
    </section>
  );
}

const menu: [string, string][] = [
  ['File', 'w-[33px]'],
  ['Edit', 'w-[35px]'],
  ['View', 'w-[40px]'],
  ['Dimensions', 'w-[75px] tracking-[-0.27px]'],
  ['Transform', 'w-[66px] tracking-[-0.5px]'],
  ['Create Geometry', 'w-[100px] tracking-[-0.42px]'],
  ['Modify Surfaces', 'w-[97px] tracking-[-0.25px]'],
  ['Fix Model', 'w-[65px]'],
  ['Modify Faceted', 'w-[94px] tracking-[-0.2px]'],
  ['Color and Texture', 'w-[106px] tracking-[-0.3px]'],
  ['Print Preparation', 'w-[102px] tracking-[-0.3px]'],
  ['Help', 'w-[30px]'],
];

export default function App() {
  return (
    <div className="flex h-[720px] w-[1280px] flex-col overflow-hidden bg-[#bfdbff] font-['Open_Sans','Noto_Sans',sans-serif] text-[11.5px] tracking-[-0.1px] text-[#243f7c]">
      <header className="grid h-[30px] shrink-0 grid-cols-[1fr_auto_1fr] items-center border-b border-t-2 border-b-[#b5cdf0] border-t-[#50556f] bg-gradient-to-b from-[#e3ebfd] via-[#d1def5] to-[#e4eeff]">
        <div className="pl-[10px]"><div className="h-4 w-4 [&>svg]:h-4 [&>svg]:w-4"><Logo /></div></div>
        <h1 className="mr-[49px] w-[141px] whitespace-nowrap text-[12px] tracking-[-0.28px] text-[#5878a9]">3DEdit Pro - dino-separate</h1>
        <div className="flex justify-end gap-[13px] pr-[13px] pt-[6px]">
          <svg viewBox="0 0 10 10" className="h-[10px] w-[10px]"><path d="M2 8h7v2H2z" fill="#65738b" /></svg>
          <svg viewBox="0 0 10 10" className="h-[10px] w-[10px]" fill="none" stroke="#65738b"><path d="M1 1.500h8v6.500H1zM1 3h8" strokeWidth="1" /></svg>
          <svg viewBox="0 0 10 10" className="h-[10px] w-[10px]" stroke="#65738b" strokeWidth="1.800"><path d="M1.500 1l7 8M8.500 1l-7 8" /></svg>
        </div>
      </header>
      <div className="flex h-[665px] shrink-0 flex-col border-x-8 border-l-[#b1cbf0] border-r-[#b1cbf0]">
        <nav className="flex h-8 shrink-0 items-center">
          <Grip className="w-4 pr-2" />
          {menu.map(([name, look]) => (
            <span key={name} className={`shrink-0 whitespace-nowrap ${look}`}>{name}</span>
          ))}
        </nav>
        <RowOne />
        <RowTwo />
        <div className="mt-[5px] flex h-[28px] shrink-0 items-start">
          <div className="ml-[4px] flex h-[28px] w-[1238px] items-center border border-[#8ba1c6] bg-[#ffffe1] pb-[2px] pl-[4px] shadow-[0_1px_0_#fff]">
            <div className="flex h-[15px] w-[15px] items-center justify-center rounded-full bg-[radial-gradient(circle_at_40%_30%,#ffd0a0,#e9864b)] font-['Liberation_Serif',serif] text-[12px] font-bold leading-none text-[#4c1e0b]">
              i
            </div>
          </div>
          <div className="-mt-px ml-[6px] flex h-5 w-3 items-center justify-center border border-[#444] bg-[#f5f6f8] text-[12px] text-black">X</div>
        </div>
        <main className="mt-[5px] flex">
          <ModelTree />
          <div className="ml-[6px] mt-px"><Viewport /></div>
          <div className="ml-[6px]"><PrintPanel /></div>
        </main>
      </div>
      <footer className="flex h-[25px] shrink-0 items-center border-t-2 border-t-[#748db7] bg-gradient-to-b from-[#e0eafc] via-[#bcd2f5] to-[#dae8ff] pb-[5px] shadow-[inset_0_1px_0_white]">
        <div className="w-[837px] pl-[11px] tracking-[-0.2px]">For Help, press F1</div>
        <div className="h-[15px] w-[206px] border-l border-[#96b1dc] shadow-[inset_1px_0_0_white]" />
        <div className="h-[15px] w-[126px] border-l border-[#96b1dc] shadow-[inset_1px_0_0_white]" />
        <div className="flex h-[15px] w-[86px] items-center border-l border-[#96b1dc] pl-[4px] tracking-[-0.25px] shadow-[inset_1px_0_0_white]">Select</div>
        <div className="h-[15px] border-l border-[#96b1dc] pl-[5px] pt-[4px]">
          <svg viewBox="0 0 12 12" className="h-3 w-3" fill="#5879b4">
            <path d="M8 0h2v2H8zM4 4h2v2H4zM8 4h2v2H8zM0 8h2v2H0zM4 8h2v2H4zM8 8h2v2H8z" />
          </svg>
        </div>
      </footer>
    </div>
  );
}
